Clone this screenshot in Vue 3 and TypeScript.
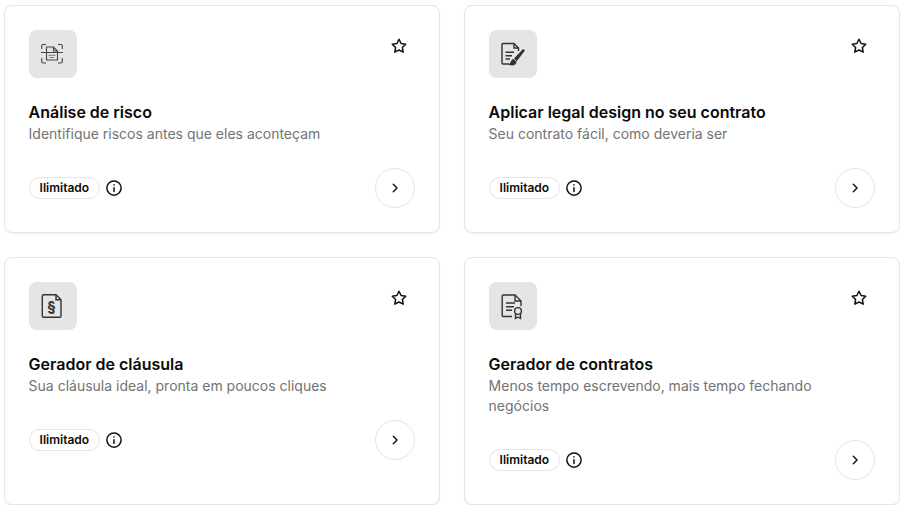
<script setup lang="ts">
interface Card { title: string; desc: string; icon: string }
const cards: Card[] = [
  { title: 'Análise de risco', desc: 'Identifique riscos antes que eles aconteçam', icon: 'scan' },
  { title: 'Aplicar legal design no seu contrato', desc: 'Seu contrato fácil, como deveria ser', icon: 'brush' },
  { title: 'Gerador de cláusula', desc: 'Sua cláusula ideal, pronta em poucos cliques', icon: 'section' },
  { title: 'Gerador de contratos', desc: 'Menos tempo escrevendo, mais tempo fechando negócios', icon: 'cert' }
]
</script>

<template>
  <div class="grid">
    <article v-for="c in cards" :key="c.title" class="card">
      <header class="top">
        <div class="tile">
          <svg v-if="c.icon === 'scan'" class="glyph" width="24" height="24" viewBox="0 0 24 24" fill="none" stroke="#444" stroke-width="1.100">
            <path d="M.7 7V4A1.500 1.500 0 0 1 2.200 2.500H5M17 2.500h2.800A1.500 1.500 0 0 1 21.300 4v3M.7 16v3.500A1.500 1.500 0 0 0 2.200 21H5M17 21h2.800a1.500 1.500 0 0 0 1.500-1.500V16" />
            <path d="M5.500 10V5h7l4 4v1M5.500 11v7h11v-7M0 10.500h22M12.500 5v4h4" />
            <path d="M7.500 13.200h7M8.500 15.500h4.500" stroke="#777" />
          </svg>
          <svg v-else-if="c.icon === 'brush'" class="glyph" width="24" height="24" viewBox="0 0 24 24" fill="none" stroke="#333" stroke-width="1.400">
            <path d="M8 22H2a1 1 0 0 1-1-1V2.500a1 1 0 0 1 1-1h11l4.500 4.500v3" />
            <path d="M13 1.500V6h4.500" />
            <path d="M4.500 10.300H13M4.500 13.700H11M4.500 17H9" />
            <path d="M24 8.500l-2-1.500-9 9.500 2.800 2.700z" fill="#333" stroke="none" />
            <path d="M12.300 17c-2.300.5-2.300 3.800-4.800 5.800 4 1.500 8 .5 8-3.200z" fill="#333" stroke="none" />
          </svg>
          <svg v-else-if="c.icon === 'section'" class="glyph" width="24" height="24" viewBox="0 0 24 24" fill="none" stroke="#333" stroke-width="1.400">
            <path d="M2.500 .8H15l5 5V22a1.200 1.200 0 0 1-1.200 1.200H2.500A1.200 1.200 0 0 1 1.300 22V2A1.200 1.200 0 0 1 2.500 .8z" />
            <path d="M15 .8v5h5" />
            <text x="10.400" y="17.500" text-anchor="middle" class="para">§</text>
          </svg>
          <svg v-else class="glyph" width="24" height="24" viewBox="0 0 24 24" fill="none" stroke="#333" stroke-width="1.400">
            <path d="M11 22.500H2.200a1 1 0 0 1-1-1V2a1 1 0 0 1 1-1H14l6 6v5" />
            <path d="M14 1v6h6" />
            <path d="M5 9h9M5 12.700h8M5 16.300h6" />
            <circle cx="17" cy="17" r="3.400" />
            <path d="M14.500 19.500v5l2.500-1.500 2.500 1.500v-5" />
          </svg>
        </div>
        <svg class="star" width="18" height="18" viewBox="0 0 24 24" fill="none" stroke="#111" stroke-width="2" stroke-linejoin="round">
          <path d="M12 3l2.800 5.700 6.200.9-4.500 4.400 1.100 6.200L12 17.300l-5.600 2.900 1.100-6.200L3 9.600l6.200-.9z" />
        </svg>
      </header>
      <h3 class="title">{{ c.title }}</h3>
      <p class="desc">{{ c.desc }}</p>
      <footer class="foot">
        <div class="meta">
          <span class="badge">Ilimitado</span>
          <svg width="18" height="18" viewBox="0 0 24 24" fill="none" stroke="#111" stroke-width="2" stroke-linecap="round">
            <circle cx="12" cy="12" r="9.500" />
            <path d="M12 11.500v5M12 7.800v.1" />
          </svg>
        </div>
        <button class="go" type="button" aria-label="Abrir">
          <svg width="16" height="16" viewBox="0 0 24 24" fill="none" stroke="#111" stroke-width="2.200" stroke-linecap="round" stroke-linejoin="round">
            <path d="M9.500 6.500l5.500 5.500-5.500 5.500" />
          </svg>
        </button>
      </footer>
    </article>
  </div>
</template>

<style scoped>
.grid {
  display: grid;
  grid-template-columns: 436px 436px;
  gap: 24px;
  padding: 5px 6px 0 3.600px;
  font-family: Inter, "Liberation Sans", sans-serif;
}
.card {
  background: #fff;
  border: 1px solid #e5e5e5;
  border-radius: 8px;
  padding: 24px;
  box-shadow: 0 1px 2px rgba(0, 0, 0, 0.05);
}
.top {
  display: flex;
  justify-content: space-between;
  align-items: flex-start;
}
.tile {
  width: 48px;
  height: 48px;
  border-radius: 8px;
  background: #e5e5e5;
  display: flex;
  align-items: center;
  justify-content: center;
}
.glyph {
  overflow: visible;
}
.para {
  font-family: Inter, "Liberation Sans", sans-serif;
  font-size: 15px;
  font-weight: 700;
  fill: #333;
  stroke: none;
}
.star {
  margin: 7px 7px 0 0;
}
.title {
  margin: 24px 0 2px;
  font-size: 16px;
  line-height: 20px;
  font-weight: 600;
  color: #0a0a0a;
}
.desc {
  margin: 0 0 24px;
  font-size: 14px;
  line-height: 20px;
  color: #737373;
}
.foot {
  display: flex;
  justify-content: space-between;
  align-items: center;
}
.meta {
  display: flex;
  align-items: center;
  gap: 5px;
}
.badge {
  border: 1px solid #e5e5e5;
  border-radius: 999px;
  padding: 0 10px 1px;
  height: 22px;
  box-sizing: border-box;
  display: inline-flex;
  align-items: center;
  font-size: 12px;
  font-weight: 600;
  color: #0a0a0a;
}
.go {
  width: 40px;
  height: 40px;
  padding: 0;
  border: 1px solid #e5e5e5;
  border-radius: 50%;
  background: #fff;
  display: flex;
  align-items: center;
  justify-content: center;
}
</style>
